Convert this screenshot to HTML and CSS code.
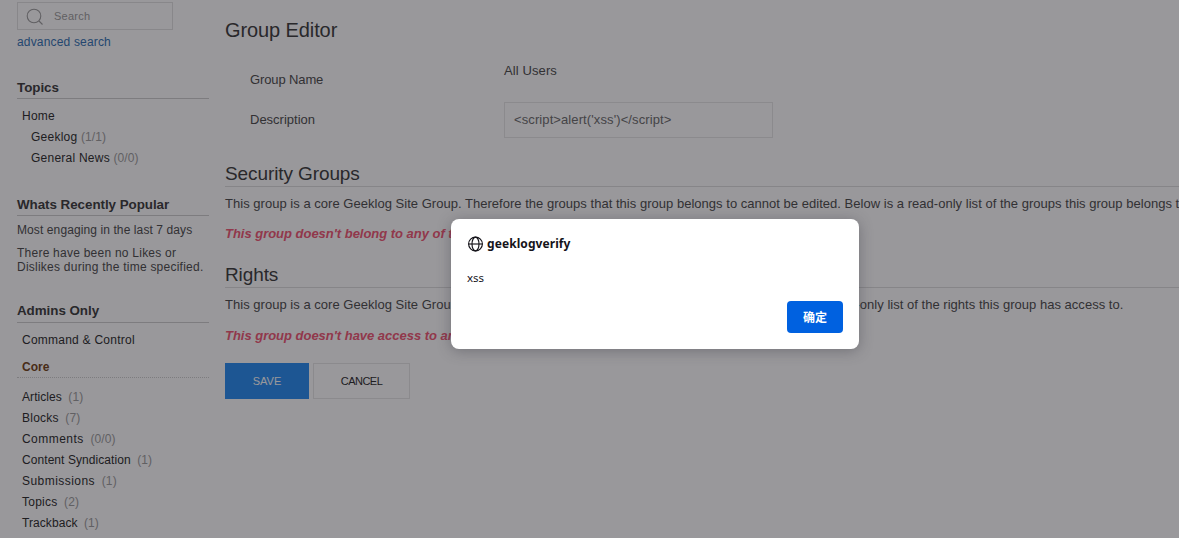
FILE: index.html
```html
<!DOCTYPE html>
<html lang="en">
<head>
<meta charset="utf-8">
<title>Group Editor</title>
<link rel="stylesheet" href="styles.css">
</head>
<body>
<div class="page">
  <aside class="sidebar">
    <div class="search">
      <svg class="search-icon" width="20" height="20" viewBox="0 0 20 20" fill="none" stroke="#999"><circle cx="9" cy="9" r="6.8" stroke-width="1.1"/><path d="M14 14l3.5 3.5" stroke-width="1.1"/></svg>
      <span>Search</span>
    </div>
    <a class="advanced">advanced search</a>
    <section class="block topics">
      <h3>Topics</h3>
      <ul class="list">
        <li>Home</li>
        <li class="sub">Geeklog <span class="count">(1/1)</span></li>
        <li class="sub">General News <span class="count">(0/0)</span></li>
      </ul>
    </section>
    <section class="block popular">
      <h3>Whats Recently Popular</h3>
      <p class="engaging">Most engaging in the last 7 days</p>
      <p>There have been no Likes or<br>Dislikes during the time specified.</p>
    </section>
    <section class="block admins">
      <h3>Admins Only</h3>
      <ul class="list">
        <li class="command">Command &amp; Control</li>
      </ul>
      <h4>Core</h4>
      <ul class="list core">
        <li class="tight">Articles <span class="count">(1)</span></li>
        <li>Blocks <span class="count">(7)</span></li>
        <li class="loose">Comments <span class="count">(0/0)</span></li>
        <li class="tight">Content Syndication <span class="count">(1)</span></li>
        <li class="loose">Submissions <span class="count">(1)</span></li>
        <li>Topics <span class="count">(2)</span></li>
        <li class="tight">Trackback <span class="count">(1)</span></li>
      </ul>
    </section>
  </aside>
  <main class="main">
    <h1>Group Editor</h1>
    <div class="form">
      <div class="row name-row"><label>Group Name</label><div class="value">All Users</div></div>
      <div class="row"><label>Description</label><div class="input">&lt;script&gt;alert('xss')&lt;/script&gt;</div></div>
    </div>
    <h2>Security Groups</h2>
    <p class="text">This group is a core Geeklog Site Group. Therefore the groups that this group belongs to cannot be edited. Below is a read-only list of the groups this group belongs to.</p>
    <p class="warning">This group doesn't belong to any of the groups.</p>
    <h2 class="rights">Rights</h2>
    <p class="text">This group is a core Geeklog Site Group. Therefore the rights for this group cannot be edited. Below is a read-only list of the rights this group has access to.</p>
    <p class="warning second">This group doesn't have access to any rights.</p>
    <div class="buttons">
      <div class="btn primary">SAVE</div>
      <div class="btn">CANCEL</div>
    </div>
  </main>
</div>
<div class="overlay">
  <div class="dialog">
    <div class="dialog-title">
      <svg width="16" height="16" viewBox="0 0 16 16" fill="none" stroke="#15141a" stroke-width="1.15"><circle cx="8.5" cy="8" r="6.9"/><ellipse cx="8.5" cy="8" rx="3.5" ry="6.9"/><path d="M1.5 8h14"/></svg>
      <span>geeklogverify</span>
    </div>
    <div class="dialog-text">xss</div>
    <div class="dialog-button">确定</div>
  </div>
</div>
</body>
</html>
```

FILE: styles.css
```css
* { box-sizing: border-box; }
body {
  margin: 0;
  height: 538px;
  overflow: hidden;
  background: #fff;
  font-family: "Liberation Sans", Arial, sans-serif;
  font-size: 13px;
  color: #444;
}
h1, h2, h3, h4, p, ul { margin: 0; padding: 0; font-weight: normal; }
ul { list-style: none; }
.page { display: flex; height: 538px; overflow: hidden; white-space: nowrap; }

.sidebar { width: 225px; flex: none; padding: 2px 16px 0 17px; font-size: 12px; letter-spacing: 0.24px; }
.search {
  display: flex;
  align-items: center;
  width: 156px;
  height: 28px;
  padding: 2px 0 0 7px;
  gap: 9px;
  border: 1px solid #e0e0e0;
  color: #999;
  font-size: 11px;
}
.search span { padding-bottom: 2px; }
.advanced { display: block; line-height: 16px; margin-top: 4px; color: #2a6cb0; letter-spacing: 0.17px; }
.block h3 {
  height: 22px;
  line-height: 22px;
  border-bottom: 1px solid #ccc;
  font-size: 13.4px;
  font-weight: bold;
  letter-spacing: -0.05px;
  color: #333;
}
.topics { margin-top: 27px; height: 117px; }
.topics .list { padding-top: 7px; }
.list li { height: 21px; line-height: 21px; padding-left: 5px; color: #222; }
.list .sub { padding-left: 14px; }
.list .tight { letter-spacing: 0.07px; }
.list .loose { letter-spacing: 0.45px; }
.count { color: #999; letter-spacing: 0.1px; }
.core .count { margin-left: 3px; }
.popular { height: 107px; }
.popular p { line-height: 14px; }
.popular .engaging { margin: 7px 0 9px; letter-spacing: 0.1px; }
.admins h3 { line-height: 20px; }
.admins .command { margin-top: 7px; }
.admins h4 {
  height: 27px;
  line-height: 32px;
  padding-left: 5px;
  border-bottom: 1px dotted #ccc;
  font-weight: bold;
  letter-spacing: 0;
  color: #6d3b10;
}
.core { padding-top: 9px; }

.main { flex: none; width: 1000px; padding-top: 17px; letter-spacing: 0; }
h1 { height: 26px; line-height: 26px; font-size: 20px; letter-spacing: -0.1px; color: #333; }
.form { padding: 16px 0 0 25px; }
.row { display: flex; height: 36px; }
.row label { width: 254px; line-height: 35px; }
.name-row { height: 43px; }
.name-row label { line-height: 41px; letter-spacing: -0.12px; }
.name-row .value { line-height: 23px; letter-spacing: 0.1px; }
.input { width: 269px; height: 36px; line-height: 34px; padding-left: 9px; border: 1px solid #e5e5e5; color: #666; letter-spacing: 0.1px; }
h2 { height: 27px; line-height: 27px; margin-top: 22px; border-bottom: 1px solid #ddd; font-size: 19px; letter-spacing: -0.1px; color: #333; }
.rights { margin-top: 17px; }
.text { height: 20px; line-height: 20px; margin-top: 7px; letter-spacing: 0.025px; }
.warning { height: 20px; line-height: 20px; margin-top: 10px; font-weight: bold; font-style: italic; letter-spacing: -0.02px; color: #f0506e; }
.second { margin-top: 11px; }
.buttons { display: flex; gap: 4px; margin-top: 17px; }
.btn { width: 97px; height: 36px; line-height: 34px; text-align: center; border: 1px solid #e5e5e5; font-size: 11px; letter-spacing: -0.5px; color: #222; }
.primary { width: 84px; background: #1e87f0; border-color: #1e87f0; color: #fff; letter-spacing: 0; }

.overlay { position: absolute; inset: 0; background: rgba(28, 27, 34, 0.45); }
.dialog {
  position: absolute;
  left: 451px;
  top: 219px;
  width: 408px;
  height: 130px;
  display: flex;
  flex-direction: column;
  padding: 16px;
  border-radius: 8px;
  background: #fff;
  box-shadow: 0 2px 14px rgba(58, 57, 68, 0.4);
  color: #15141a;
  font: 11.5px "Noto Sans", "Noto Sans CJK SC", sans-serif;
}
.dialog-title { display: flex; align-items: center; gap: 4px; height: 17px; font-size: 12px; font-weight: bold; letter-spacing: 0.08px; }
.dialog-text { height: 17px; line-height: 17px; margin-top: 17px; }
.dialog-button {
  align-self: flex-end;
  width: 56px;
  height: 32px;
  line-height: 31px;
  margin-top: 15px;
  border-radius: 4px;
  background: #0061e0;
  color: #fff;
  font-size: 12px;
  font-weight: bold;
  font-family: "Noto Sans CJK SC", sans-serif;
  text-align: center;
}
```
